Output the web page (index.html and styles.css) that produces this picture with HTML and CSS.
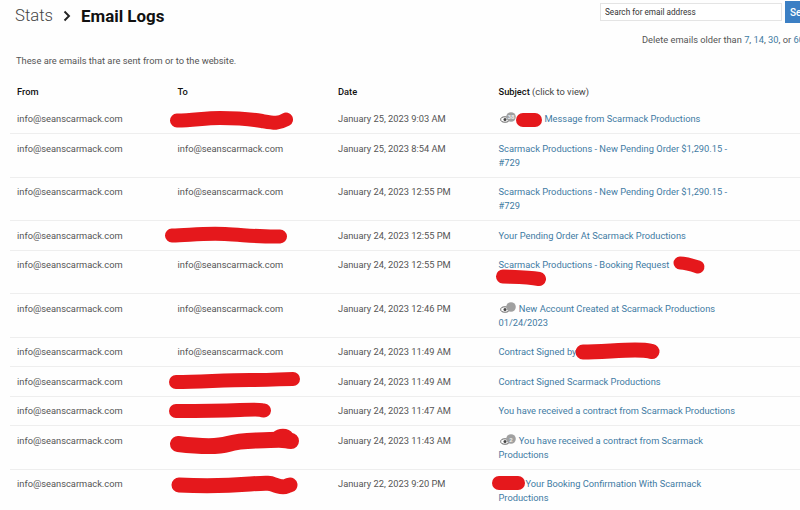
FILE: index.html
```html
<!DOCTYPE html>
<html lang="en">
<head>
<meta charset="utf-8">
<title>Email Logs</title>
<link rel="stylesheet" href="styles.css">
</head>
<body>
<main class="page">
  <header class="top">
    <h1 class="crumbs">
      <span class="crumb-parent">Stats</span>
      <svg class="chev" width="8" height="12" viewBox="0 0 8 12"><path d="M1.500 1.500 6 6 1.500 10.500" fill="none" stroke="#222" stroke-width="1.900"/></svg>
      <span class="crumb-current">Email Logs</span>
    </h1>
    <div class="tools">
      <form class="search">
        <input class="search-input" type="text" placeholder="Search for email address">
        <button class="search-btn" type="button">Search</button>
      </form>
      <p class="delete">Delete emails older than <a href="#">7</a>, <a href="#">14</a>, <a href="#">30</a>, or <a href="#">60</a> days</p>
    </div>
  </header>
  <p class="intro">These are emails that are sent from or to the website.</p>
  <table class="logs">
    <thead>
      <tr><th>From</th><th>To</th><th>Date</th><th>Subject <span class="hint">(click to view)</span></th></tr>
    </thead>
    <tbody>
      <tr><td>info@seanscarmack.com</td><td></td><td>January 25, 2023 9:03 AM</td><td><svg class="eye" width="18" height="12" viewBox="0 0 18 12"><ellipse cx="6" cy="7.500" rx="4.300" ry="2.700" fill="#fff" stroke="#666" stroke-width="1"/><circle cx="6" cy="7.500" r="1.500" fill="#444"/><circle cx="12" cy="5" r="4.800" fill="#a0a0a0"/><text x="12" y="7" class="eye-num">38</text></svg><span class="gap-a"></span><a href="#">Message from Scarmack Productions</a></td></tr>
      <tr><td>info@seanscarmack.com</td><td>info@seanscarmack.com</td><td>January 25, 2023 8:54 AM</td><td><a href="#">Scarmack Productions - New Pending Order $1,290.15 - #729</a></td></tr>
      <tr><td>info@seanscarmack.com</td><td>info@seanscarmack.com</td><td>January 24, 2023 12:55 PM</td><td><a href="#">Scarmack Productions - New Pending Order $1,290.15 - #729</a></td></tr>
      <tr><td>info@seanscarmack.com</td><td></td><td>January 24, 2023 12:55 PM</td><td><a href="#">Your Pending Order At Scarmack Productions</a></td></tr>
      <tr><td>info@seanscarmack.com</td><td>info@seanscarmack.com</td><td>January 24, 2023 12:55 PM</td><td><a href="#">Scarmack Productions - Booking Request</a><br>&nbsp;</td></tr>
      <tr><td>info@seanscarmack.com</td><td>info@seanscarmack.com</td><td>January 24, 2023 12:46 PM</td><td><svg class="eye" width="18" height="12" viewBox="0 0 18 12"><ellipse cx="6" cy="7.500" rx="4.300" ry="2.700" fill="#fff" stroke="#666" stroke-width="1"/><circle cx="6" cy="7.500" r="1.500" fill="#444"/><circle cx="12" cy="5" r="4.800" fill="#a0a0a0"/></svg> <a href="#">New Account Created at Scarmack Productions 01/24/2023</a></td></tr>
      <tr><td>info@seanscarmack.com</td><td>info@seanscarmack.com</td><td>January 24, 2023 11:49 AM</td><td><a href="#">Contract Signed by</a></td></tr>
      <tr><td>info@seanscarmack.com</td><td></td><td>January 24, 2023 11:49 AM</td><td><a href="#">Contract Signed Scarmack Productions</a></td></tr>
      <tr><td>info@seanscarmack.com</td><td></td><td>January 24, 2023 11:47 AM</td><td><a href="#">You have received a contract from Scarmack Productions</a></td></tr>
      <tr><td>info@seanscarmack.com</td><td></td><td>January 24, 2023 11:43 AM</td><td><svg class="eye" width="18" height="12" viewBox="0 0 18 12"><ellipse cx="6" cy="7.500" rx="4.300" ry="2.700" fill="#fff" stroke="#666" stroke-width="1"/><circle cx="6" cy="7.500" r="1.500" fill="#444"/><circle cx="12" cy="5" r="4.800" fill="#a0a0a0"/><text x="12" y="7.500" class="eye-num">2</text></svg> <a href="#">You have received a contract from Scarmack Productions</a></td></tr>
      <tr><td>info@seanscarmack.com</td><td></td><td>January 22, 2023 9:20 PM</td><td><span class="gap-b"></span><a href="#">Your Booking Confirmation With Scarmack Productions</a></td></tr>
    </tbody>
  </table>
  <svg class="scribbles" width="800" height="510" viewBox="0 0 800 510" fill="none" stroke="#e5181c" stroke-linecap="round" stroke-linejoin="round">
    <path stroke-width="14" d="M177 120.500C195 120 205 118 220 118S250 119 262 121 278 124 286 119.500"/>
    <path stroke-width="14" d="M172 235.500C190 235 205 233 225 234S260 237 280 236.500"/>
    <path stroke-width="14" d="M176 382C200 382 225 380 250 380S280 379 293 379"/>
    <path stroke-width="14" d="M176 411C195 411 215 411 240 410S258 410 264 410.500"/>
    <path stroke-width="16" d="M178 444C195 446 215 448 228 444S250 441 270 440 285 441 291 441"/>
    <path stroke-width="12" d="M277 437C280 434 286 434 288 437"/>
    <path stroke-width="15" d="M179 485C200 486 225 486 250 484S270 484 278 486 285 486 290 485"/>
    <path stroke-width="14" d="M523 120H535"/>
    <path stroke-width="13" d="M680 263C685 263 692 265 698 267"/>
    <path stroke-width="14" d="M503 276.500C515 277 528 277 539 279"/>
    <path stroke-width="15" d="M583 352C600 352 620 350 635 350S648 351 652 351.500"/>
    <path stroke-width="14" d="M499 483H518"/>
  </svg>
</main>
</body>
</html>
```
FILE: styles.css
```css
html, body {
  margin: 0;
  height: 100%;
  overflow: hidden;
  background: #fefefe;
}
body {
  font-family: Roboto, "Liberation Sans", sans-serif;
  font-size: 9.300px;
  line-height: 14px;
  color: #555;
}
a {
  color: #3f7ba3;
  text-decoration: none;
}
.page {
  position: relative;
  width: 850px;
  height: 510px;
  padding-left: 10px;
  box-sizing: border-box;
  overflow: hidden;
}
.top {
  display: flex;
  justify-content: space-between;
  align-items: flex-start;
  height: 54px;
}
.crumbs {
  display: flex;
  align-items: center;
  gap: 10px;
  margin: 4px 0 0 5px;
  line-height: 24px;
  font-size: 16.700px;
  font-weight: 300;
  color: #444;
}
.crumb-current {
  font-size: 16.900px;
  font-weight: 700;
  color: #111;
}
.tools {
  width: 250px;
  padding-top: 1px;
}
.search {
  display: flex;
  align-items: center;
  gap: 3px;
  margin: 0;
}
.search-input {
  box-sizing: border-box;
  width: 182px;
  height: 18px;
  margin: 0;
  padding: 0 4px;
  border: 1px solid #e4e4e4;
  background: #fff;
  font: 8.200px Roboto, sans-serif;
}
.search-input::placeholder {
  color: #333;
  opacity: 1;
}
.search-btn {
  width: 60px;
  height: 22px;
  margin: 0;
  padding: 0 0 0 5px;
  border: 0;
  text-align: left;
  background: #3b7fc4;
  color: #fff;
  font: 500 10px Roboto, sans-serif;
}
.delete {
  margin: 10px 0 0 42px;
  white-space: nowrap;
}
.intro {
  margin: 0 0 0 6px;
}
.logs {
  width: 800px;
  margin-top: 10px;
  border-collapse: collapse;
  table-layout: fixed;
}
.logs th, .logs td {
  width: 160.500px;
  box-sizing: border-box;
  padding: 7.250px 7px;
  text-align: left;
  vertical-align: top;
}
.logs th:last-child, .logs td:last-child {
  width: 318.500px;
  padding-right: 71.500px;
}
.logs th {
  color: #111;
  font-weight: 500;
  padding-bottom: 5.500px;
}
.logs th .hint {
  font-weight: 400;
  color: #444;
}
.logs tbody tr + tr {
  border-top: 1px solid #eee;
}
.eye {
  vertical-align: top;
  height: 12px;
}
.eye-num {
  font-size: 6px;
  font-weight: 700;
  fill: #eee;
  text-anchor: middle;
}
.gap-a {
  display: inline-block;
  width: 28px;
}
.gap-b {
  display: inline-block;
  width: 27px;
}
.scribbles {
  position: absolute;
  top: 0;
  left: 0;
  pointer-events: none;
}
```
